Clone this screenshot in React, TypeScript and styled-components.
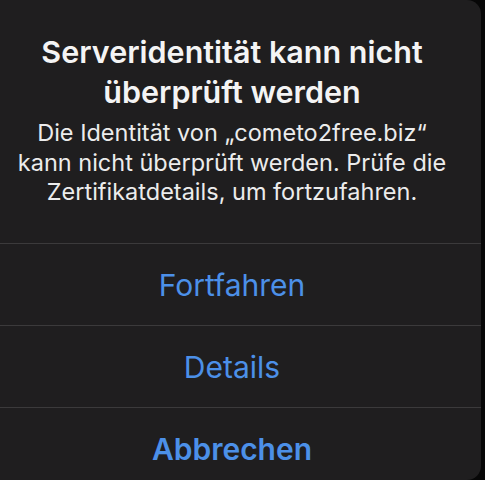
import React from "react";
import styled, { createGlobalStyle } from "styled-components";

const Global = createGlobalStyle`
  html, body { margin: 0; padding: 0; background: #050505; }
  body { width: 485px; height: 480px; overflow: hidden; font-family: Inter, "Liberation Sans", sans-serif; }
`;

const Screen = styled.div`
  width: 485px;
  height: 480px;
  display: flex;
  overflow: hidden;
  background: #070707;
`;

const Sheet = styled.div`
  width: 498px;
  height: 480px;
  margin-left: -17px;
  flex: none;
  background: #1f1e1f;
  border-radius: 0 14px 14px 0;
  display: flex;
  flex-direction: column;
  overflow: hidden;
`;

const Header = styled.div`
  height: 243px;
  flex: none;
  box-sizing: border-box;
  padding: 32px 0 0;
  display: flex;
  flex-direction: column;
  align-items: center;
  text-align: center;
`;

const Title = styled.h1`
  margin: 0;
  font-size: 30.5px;
  line-height: 40px;
  font-weight: 600;
  color: #f4f4f4;
  white-space: nowrap;
`;

const Message = styled.p`
  margin: 6px 0 0;
  font-size: 23.5px;
  line-height: 29.5px;
  font-weight: 400;
  color: #ececec;
  white-space: nowrap;
`;

const Action = styled.button<{ $bold?: boolean }>`
  height: 82px;
  flex: none;
  border: 0;
  border-top: 1.5px solid #3b3a3b;
  background: transparent;
  color: #4c90e8;
  font-family: Inter, "Liberation Sans", sans-serif;
  font-size: 30px;
  font-weight: ${(p) => (p.$bold ? 600 : 400)};
  padding: 0;
  display: flex;
  align-items: center;
  justify-content: center;
`;

export default function App() {
  return (
    <>
      <Global />
      <Screen>
        <Sheet>
          <Header>
            <Title>
              Serveridentität kann nicht
              <br />
              überprüft werden
            </Title>
            <Message>
              Die Identität von „cometo2free.biz“
              <br />
              kann nicht überprüft werden. Prüfe die
              <br />
              Zertifikatdetails, um fortzufahren.
            </Message>
          </Header>
          <Action>Fortfahren</Action>
          <Action>Details</Action>
          <Action $bold>Abbrechen</Action>
        </Sheet>
      </Screen>
    </>
  );
}
